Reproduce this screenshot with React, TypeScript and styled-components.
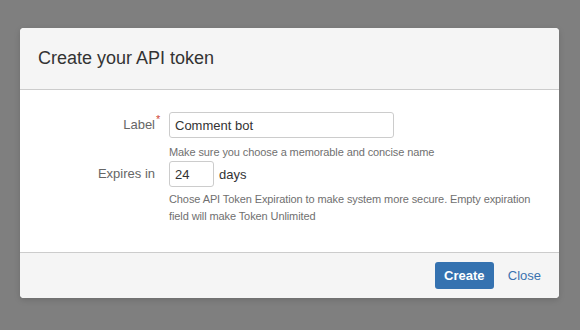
import styled, { createGlobalStyle } from 'styled-components'

const GlobalStyle = createGlobalStyle`
  html, body {
    margin: 0;
    padding: 0;
    background: #7f7f7f;
    font-family: Arial, "Liberation Sans", sans-serif;
    color: #333333;
  }
`

const Backdrop = styled.div`
  width: 580px;
  height: 330px;
  padding: 28px 0 0 20px;
  box-sizing: border-box;
`

const Dialog = styled.div`
  width: 539px;
  background: #ffffff;
  border-radius: 4px;
  overflow: hidden;
  box-shadow: 0 2px 6px rgba(0, 0, 0, 0.15);
`

const Header = styled.div`
  height: 61px;
  display: flex;
  align-items: center;
  padding-left: 18px;
  background: #f5f5f5;
  border-bottom: 1px solid #cccccc;
`

const Title = styled.h2`
  margin: 0;
  font-size: 18px;
  font-weight: normal;
  color: #333333;
`

const Body = styled.div`
  height: 162px;
  box-sizing: border-box;
  padding: 22px 0 0 0;
`

const Field = styled.div`
  display: grid;
  grid-template-columns: 139px 1fr;
  column-gap: 10px;
`

const Label = styled.label`
  text-align: right;
  font-size: 13px;
  line-height: 26px;
  color: #666666;
  padding-right: 4px;
`

const LabelText = styled.span`
  position: relative;
`

const Required = styled.span`
  position: absolute;
  left: 100%;
  top: -3px;
  margin-left: 1px;
  color: #d04437;
  font-size: 11px;
  line-height: 1;
`

const Controls = styled.div`
  display: flex;
  flex-direction: column;
`

const InputRow = styled.div`
  display: flex;
  align-items: center;
  gap: 5px;
`

const TextInput = styled.input<{ $width: number }>`
  width: ${p => p.$width}px;
  height: 26px;
  box-sizing: border-box;
  border: 1px solid #cccccc;
  border-radius: 3px;
  padding: 0 5px;
  font-family: Arial, "Liberation Sans", sans-serif;
  font-size: 13px;
  color: #333333;
  background: #ffffff;
  outline: none;
`

const Unit = styled.span`
  font-size: 13px;
  color: #333333;
`

const Help = styled.div<{ $gap: number }>`
  font-size: 11px;
  letter-spacing: -0.1px;
  line-height: 17px;
  color: #707070;
  margin-top: ${p => p.$gap}px;
  max-width: 372px;
`

const Footer = styled.div`
  height: 45px;
  border-top: 1px solid #cccccc;
  background: #f5f5f5;
  display: flex;
  align-items: center;
  justify-content: flex-end;
  padding-right: 18px;
  gap: 14px;
`

const PrimaryButton = styled.button`
  height: 27px;
  width: 59px;
  border: none;
  border-radius: 3px;
  background: #3572b0;
  color: #ffffff;
  font-family: Arial, "Liberation Sans", sans-serif;
  font-size: 13px;
  font-weight: bold;
  padding: 0;
  cursor: pointer;
`

const LinkButton = styled.a`
  font-size: 13px;
  color: #3b73af;
  text-decoration: none;
  cursor: pointer;
`

export default function App() {
  return (
    <>
      <GlobalStyle />
      <Backdrop>
        <Dialog>
          <Header>
            <Title>Create your API token</Title>
          </Header>
          <Body>
            <Field>
              <Label>
                <LabelText>
                  Label<Required>*</Required>
                </LabelText>
              </Label>
              <Controls>
                <TextInput $width={225} defaultValue="Comment bot" />
                <Help $gap={6}>Make sure you choose a memorable and concise name</Help>
              </Controls>
            </Field>
            <Field>
              <Label>
                <LabelText>Expires in</LabelText>
              </Label>
              <Controls>
                <InputRow>
                  <TextInput $width={45} defaultValue="24" />
                  <Unit>days</Unit>
                </InputRow>
                <Help $gap={4}>
                  Chose API Token Expiration to make system more secure. Empty expiration field
                  will make Token Unlimited
                </Help>
              </Controls>
            </Field>
          </Body>
          <Footer>
            <PrimaryButton>Create</PrimaryButton>
            <LinkButton>Close</LinkButton>
          </Footer>
        </Dialog>
      </Backdrop>
    </>
  )
}
